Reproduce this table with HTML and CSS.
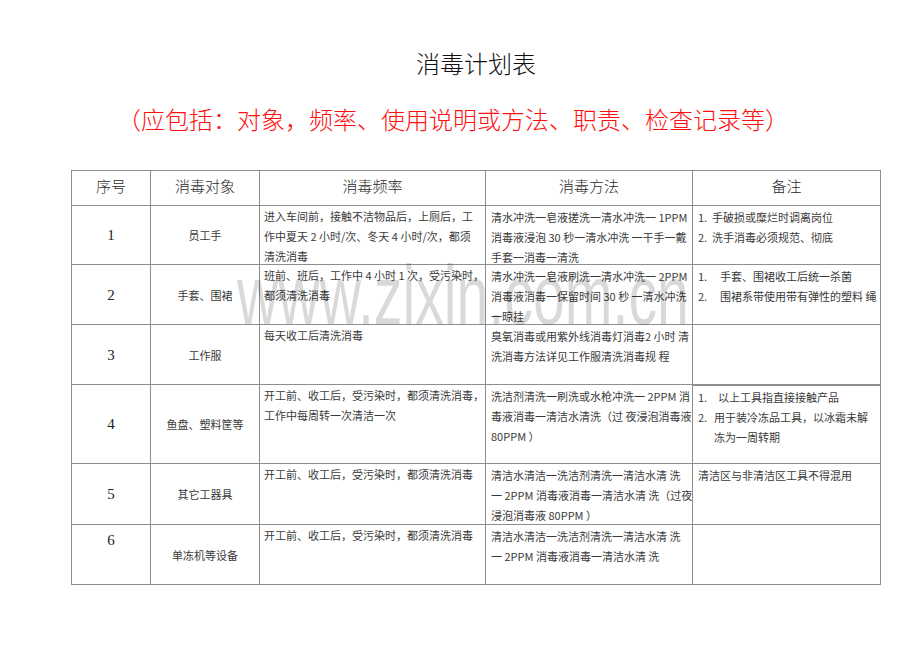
FILE: index.html
```html
<!DOCTYPE html>
<html lang="zh-CN">
<head>
<meta charset="utf-8">
<title>消毒计划表</title>
<link rel="stylesheet" href="styles.css">
</head>
<body>
<div class="page">
  <h1 class="title">消毒计划表</h1>
  <p class="note">（应包括：对象，频率、使用说明或方法、职责、检查记录等）</p>

  <div class="plan">
    <div class="head">序号</div>
    <div class="head">消毒对象</div>
    <div class="head">消毒频率</div>
    <div class="head">消毒方法</div>
    <div class="head">备注</div>

    <div class="no">1</div>
    <div class="obj">员工手</div>
    <div class="txt freq"><p>进入车间前，接触不洁物品后，上厕后，工<br>作中夏天 2 小时/次、冬天 4 小时/次，都须<br>清洗消毒</p></div>
    <div class="txt method"><p>清水冲洗一皂液搓洗一清水冲洗一 1PPM<br>消毒液浸泡 30 秒一清水冲洗 一干手一戴<br>手套一消毒一清洗</p></div>
    <div class="txt remark">
      <div class="item"><span class="num n14">1.</span><span>手破损或糜烂时调离岗位</span></div>
      <div class="item"><span class="num n14">2.</span><span>洗手消毒必须规范、彻底</span></div>
    </div>

    <div class="no">2</div>
    <div class="obj">手套、围裙</div>
    <div class="txt freq"><p>班前、班后，工作中 4 小时 1 次，受污染时，<br>都须清洗消毒</p></div>
    <div class="txt method"><p>清水冲洗一皂液刷洗一清水冲洗一 2PPM<br>消毒液消毒一保留时间 30 秒 一清水冲洗<br>一晾挂</p></div>
    <div class="txt remark">
      <div class="item"><span class="num n22">1.</span><span>手套、围裙收工后统一杀菌</span></div>
      <div class="item"><span class="num n22">2.</span><span>围裙系带使用带有弹性的塑料 绳</span></div>
    </div>

    <div class="no">3</div>
    <div class="obj">工作服</div>
    <div class="txt freq"><p class="lower2">每天收工后清洗消毒</p></div>
    <div class="txt method"><p>臭氧消毒或用紫外线消毒灯消毒2 小时 清<br>洗消毒方法详见工作服清洗消毒规 程</p></div>
    <div class="txt remark"></div>

    <div class="no">4</div>
    <div class="obj">鱼盘、塑料筐等</div>
    <div class="txt freq"><p class="lower3">开工前、收工后，受污染时，都须清洗消毒，<br>工作中每周转一次清洁一次</p></div>
    <div class="txt method"><p class="lower1">洗洁剂清洗一刷洗或水枪冲洗一 2PPM 消<br>毒液消毒一清洁水清洗（过 夜浸泡消毒液<br>80PPM ）</p></div>
    <div class="txt remark lower1">
      <div class="item"><span class="num n20">1.</span><span>以上工具指直接接触产品</span></div>
      <div class="item"><span class="num n17">2.</span><span>用于装冷冻品工具，以冰霜未解<br>冻为一周转期</span></div>
    </div>

    <div class="no">5</div>
    <div class="obj">其它工器具</div>
    <div class="txt freq"><p class="raise3">开工前、收工后，受污染时，都须清洗消毒</p></div>
    <div class="txt method"><p>清洁水清洁一洗洁剂清洗一清洁水清 洗<br>一 2PPM 消毒液消毒一清洁水清 洗（过夜<br>浸泡消毒液 80PPM ）</p></div>
    <div class="txt remark"><p class="raise1">清洁区与非清洁区工具不得混用</p></div>

    <div class="no top">6</div>
    <div class="obj">单冻机等设备</div>
    <div class="txt freq"><p class="raise2">开工前、收工后，受污染时，都须清洗消毒</p></div>
    <div class="txt method"><p>清洁水清洁一洗洁剂清洗一清洁水清 洗<br>一 2PPM 消毒液消毒一清洁水清 洗</p></div>
    <div class="txt remark"></div>
  </div>
</div>
<div class="watermark">www.zixin.com.cn</div>
</body>
</html>
```

FILE: styles.css
```css
html, body {
  margin: 0;
  padding: 0;
  background: #ffffff;
}

body {
  position: relative;
  width: 920px;
  height: 651px;
  overflow: hidden;
  font-family: "Noto Sans CJK SC", "Noto Sans", sans-serif;
  color: #333333;
}

.page {
  margin-left: 71px;
  width: 810px;
  padding-top: 48px;
}

.title {
  margin: 0;
  font-size: 24px;
  line-height: 30px;
  font-weight: 300;
  text-align: center;
  color: #111111;
}

.note {
  margin: 26px 0 0 46px;
  font-size: 24px;
  line-height: 30px;
  font-weight: 300;
  color: #ff1010;
  white-space: nowrap;
}

.plan {
  margin-top: 36px;
  display: grid;
  grid-template-columns: 78px 108px 225px 206px 187px;
  grid-template-rows: 34px 58px 59px 59px 78px 60px 59px;
  gap: 1px;
  padding: 1px;
  width: 810px;
  box-sizing: border-box;
  background: #8e8e8e;
}

.plan > div {
  background: #ffffff;
  overflow: hidden;
}

.head {
  display: flex;
  align-items: center;
  justify-content: center;
  padding-bottom: 5px;
  box-sizing: border-box;
  font-size: 15px;
  font-weight: 300;
  color: #2a2a2a;
}

.no {
  display: flex;
  align-items: center;
  justify-content: center;
  font-family: "Liberation Serif", serif;
  font-size: 15px;
  line-height: 20px;
  color: #222222;
}

.no.top {
  align-items: flex-start;
  padding-top: 5px;
}

.obj {
  display: flex;
  align-items: center;
  justify-content: center;
  font-size: 11px;
  color: #3a3a3a;
}

.txt {
  font-size: 11px;
  line-height: 20px;
  color: #3a3a3a;
  white-space: nowrap;
  box-sizing: border-box;
}

.txt p {
  margin: 0;
}

.freq {
  padding: 0 4px;
}

.method,
.remark {
  padding: 1px 5px 0;
}

.item {
  display: flex;
}

.num {
  flex: none;
}

.n14 { width: 14px; }
.n17 { width: 16px; }
.n20 { width: 20px; }
.n22 { width: 22px; }

.lower1 { margin-top: 1px; }
.lower2 { margin-top: 2px; }
.lower3 { margin-top: 3px; }
.raise1 { margin-top: -1px; }
.raise2 { margin-top: -2px; }
.raise3 { margin-top: -3px; }

.watermark {
  position: absolute;
  left: 237px;
  top: 254px;
  font-family: "Liberation Sans", Arial, sans-serif;
  font-size: 83px;
  line-height: 83px;
  color: rgba(0, 0, 0, 0.15);
  white-space: nowrap;
  transform: scaleX(0.69);
  transform-origin: left top;
  pointer-events: none;
}
```
